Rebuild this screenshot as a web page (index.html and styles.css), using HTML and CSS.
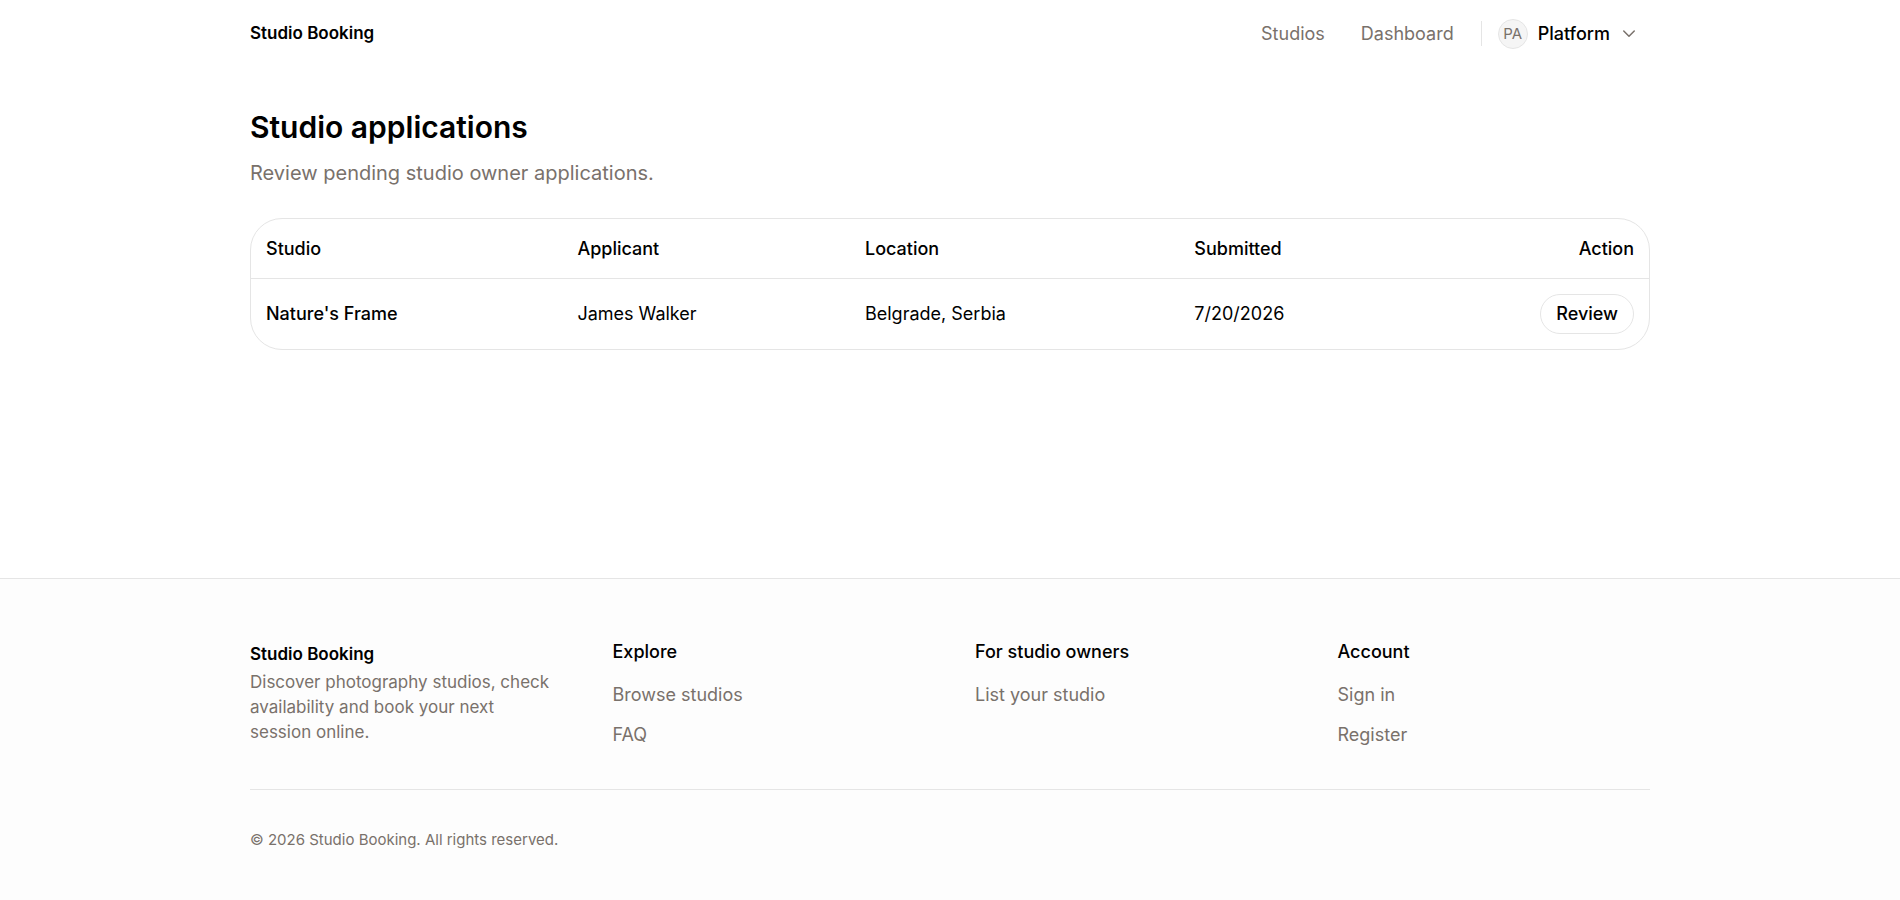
FILE: index.html
```html
<!DOCTYPE html>
<html lang="en">
<head>
    <meta charset="UTF-8">
    <meta name="viewport" content="width=device-width, initial-scale=1.0">
    <title>Studio applications - Studio Booking</title>
    <link rel="stylesheet" href="styles.css">
</head>
<body>
    <header class="header">
        <div class="container header-inner">
            <a href="#" class="brand">Studio Booking</a>
            <nav class="nav">
                <div class="nav-links">
                    <a href="#">Studios</a>
                    <a href="#">Dashboard</a>
                </div>
                <div class="account">
                    <button type="button" class="account-btn">
                        <span class="avatar">PA</span>
                        <span>Platform</span>
                        <svg class="chevron" viewBox="0 0 24 24" fill="none" stroke="currentColor" stroke-width="2" stroke-linecap="round" stroke-linejoin="round" aria-hidden="true">
                            <path d="m5 8 7 7 7-7"/>
                        </svg>
                    </button>
                </div>
            </nav>
        </div>
    </header>

    <main class="container main">
        <h1 class="page-title">Studio applications</h1>
        <p class="page-subtitle">Review pending studio owner applications.</p>

        <div class="table-wrap">
            <table class="table">
                <thead>
                    <tr>
                        <th>Studio</th>
                        <th>Applicant</th>
                        <th>Location</th>
                        <th>Submitted</th>
                        <th class="col-action">Action</th>
                    </tr>
                </thead>
                <tbody>
                    <tr>
                        <td class="cell-name">Nature's Frame</td>
                        <td>James Walker</td>
                        <td>Belgrade, Serbia</td>
                        <td>7/20/2026</td>
                        <td class="col-action"><button type="button" class="btn">Review</button></td>
                    </tr>
                </tbody>
            </table>
        </div>
    </main>

    <footer class="footer">
        <div class="container">
            <div class="footer-grid">
                <div>
                    <a href="#" class="brand">Studio Booking</a>
                    <p class="footer-text">Discover photography studios, check availability and book your next session online.</p>
                </div>
                <div>
                    <h2 class="footer-title">Explore</h2>
                    <ul class="footer-links">
                        <li><a href="#">Browse studios</a></li>
                        <li><a href="#">FAQ</a></li>
                    </ul>
                </div>
                <div>
                    <h2 class="footer-title">For studio owners</h2>
                    <ul class="footer-links">
                        <li><a href="#">List your studio</a></li>
                    </ul>
                </div>
                <div>
                    <h2 class="footer-title">Account</h2>
                    <ul class="footer-links">
                        <li><a href="#">Sign in</a></li>
                        <li><a href="#">Register</a></li>
                    </ul>
                </div>
            </div>
            <p class="copyright">© 2026 Studio Booking. All rights reserved.</p>
        </div>
    </footer>
</body>
</html>
```
FILE: styles.css
```css
* {
    margin: 0;
    padding: 0;
    box-sizing: border-box;
}

body {
    display: flex;
    flex-direction: column;
    min-height: 100vh;
    background: #fff;
    color: #000;
    font-family: Inter, "Liberation Sans", sans-serif;
    font-size: 18px;
    line-height: 25px;
}

a {
    color: inherit;
    text-decoration: none;
}

button {
    font: inherit;
    color: inherit;
    background: none;
    border: none;
    cursor: pointer;
}

.container {
    width: 100%;
    max-width: 1400px;
    margin: 0 auto;
}

/* Header */
.header-inner {
    display: flex;
    align-items: center;
    justify-content: space-between;
    height: 67px;
}

.brand {
    display: block;
    font-size: 17px;
    font-weight: 600;
    line-height: 31px;
}

.nav {
    display: flex;
    align-items: center;
    gap: 27px;
    padding-right: 12px;
}

.nav-links {
    display: flex;
    gap: 36px;
    color: #79716b;
}

.account {
    display: flex;
    align-items: center;
    height: 25px;
    padding-left: 16px;
    border-left: 1px solid #e5e5e5;
}

.account-btn {
    display: flex;
    align-items: center;
    gap: 10px;
    font-weight: 500;
}

.avatar {
    width: 30px;
    height: 30px;
    border: 1px solid #e5e5e5;
    border-radius: 50%;
    background: #f5f5f5;
    color: #79716b;
    font-size: 15px;
    font-weight: 400;
    line-height: 28px;
    text-align: center;
}

.chevron {
    width: 18px;
    height: 18px;
    color: #79716b;
}

/* Applications */
.main {
    flex: 1;
    padding: 40px 0;
}

.page-title {
    font-size: 30px;
    font-weight: 600;
    line-height: 40px;
}

.page-subtitle {
    margin-top: 11px;
    color: #79716b;
    font-size: 20px;
    line-height: 30px;
}

.table-wrap {
    margin-top: 30px;
    overflow: hidden;
    border: 1px solid #e5e5e5;
    border-radius: 32px;
}

.table {
    width: 100%;
    border-collapse: collapse;
    text-align: left;
}

.table th {
    height: 59px;
    padding: 0 15px;
    border-bottom: 1px solid #e5e5e5;
    font-weight: 500;
}

.table td {
    padding: 15px;
}

.table .cell-name {
    font-weight: 500;
}

.table .col-action {
    text-align: right;
}

.btn {
    height: 40px;
    padding: 0 15px;
    border: 1px solid #e5e5e5;
    border-radius: 20px;
    font-weight: 500;
    vertical-align: top;
}

/* Footer */
.footer {
    padding: 60px 0 50px;
    border-top: 1px solid #e5e5e5;
    background: #fdfdfd;
}

.footer-grid {
    display: grid;
    grid-template-columns: repeat(4, 1fr);
    gap: 50px;
    padding-bottom: 42px;
    border-bottom: 1px solid #e5e5e5;
}

.footer-text {
    max-width: 304px;
    color: #79716b;
    font-size: 17px;
}

.footer-title {
    font-size: 18px;
    font-weight: 500;
}

.footer-links {
    display: flex;
    flex-direction: column;
    gap: 15px;
    margin-top: 18px;
    color: #79716b;
    list-style: none;
}

.copyright {
    margin-top: 40px;
    color: #79716b;
    font-size: 15px;
    line-height: 20px;
}

@media (max-width: 1440px) {
    .container {
        padding-left: 20px;
        padding-right: 20px;
    }
}

@media (max-width: 900px) {
    .footer-grid {
        grid-template-columns: repeat(2, 1fr);
    }

    .table-wrap {
        overflow-x: auto;
    }
}
```
